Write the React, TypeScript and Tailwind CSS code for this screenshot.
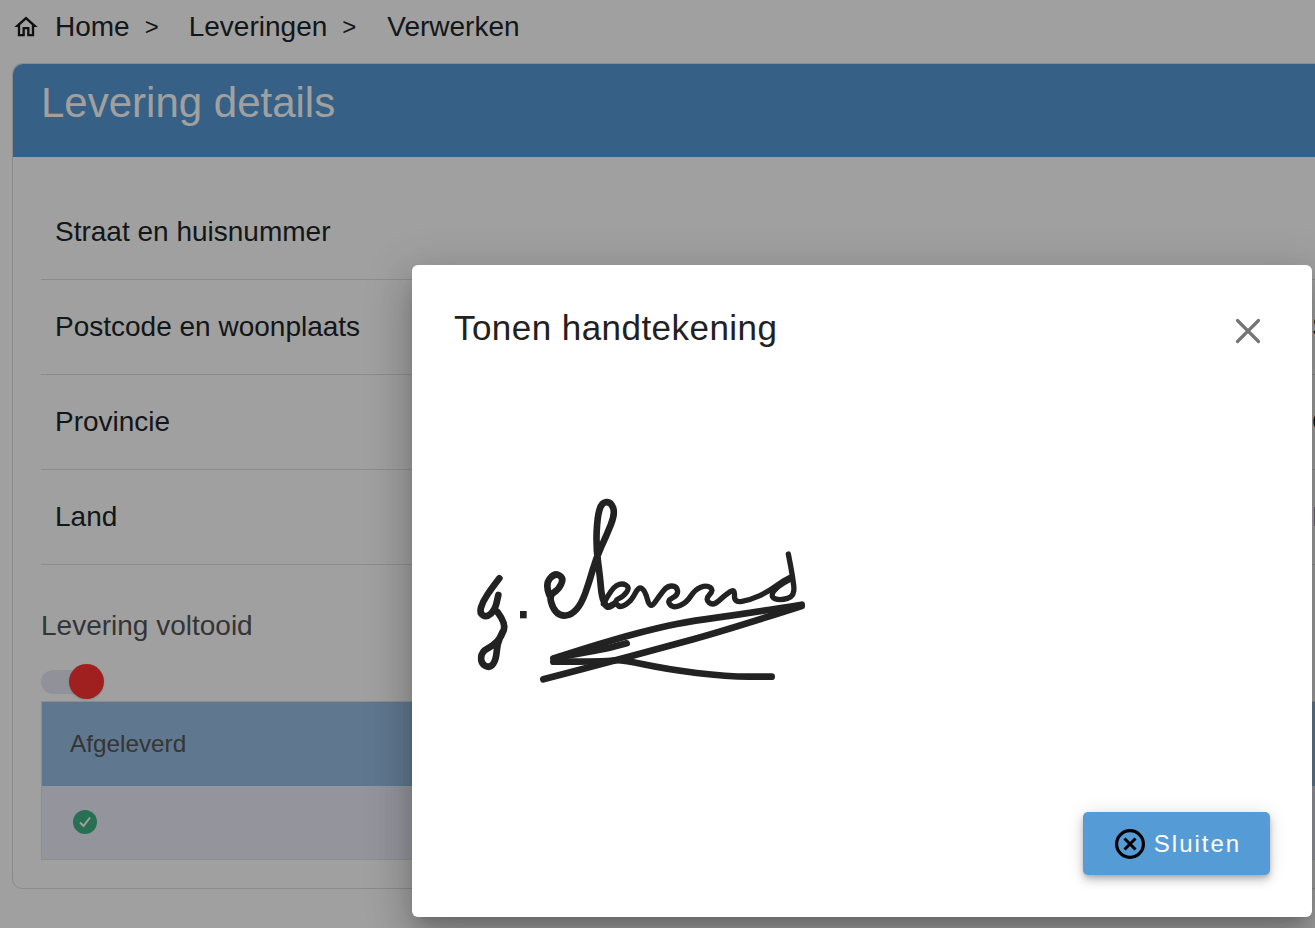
import { useState } from 'react'

const rows = [
  { label: 'Straat en huisnummer', value: '', color: '' },
  { label: 'Postcode en woonplaats', value: 'Sint', color: '' },
  { label: 'Provincie', value: 'Overijssel', color: '' },
  { label: 'Land', value: 'Nederland', color: 'text-[#3f86c4]' },
]

// rounds the hand traced points of the signature off
const smooth = (pts: number[][]) => {
  let d = `M${pts[0][0]} ${pts[0][1]}`
  for (let i = 1; i < pts.length - 1; i++) {
    const mx = (pts[i][0] + pts[i + 1][0]) / 2
    const my = (pts[i][1] + pts[i + 1][1]) / 2
    d += ` Q${pts[i][0]} ${pts[i][1]} ${mx} ${my}`
  }
  const last = pts[pts.length - 1]
  return d + ` L${last[0]} ${last[1]}`
}

const thinStrokes = [
  // e v e r d of the word
  [[430, 372], [455, 325], [485, 308], [510, 322], [490, 350], [462, 362], [480, 385], [515, 362], [535, 320], [555, 330], [570, 388], [600, 345], [622, 318], [650, 318], [655, 345], [620, 362], [640, 385], [680, 368], [705, 328], [740, 315], [762, 330], [735, 358], [760, 378], [795, 345], [825, 325], [822, 368], [870, 360], [925, 335], [965, 305], [990, 292]],
  [[990, 298], [952, 318], [930, 350], [960, 362], [1005, 348], [998, 290], [985, 222]],
]

const strokes = [
  // g
  [[118, 295], [95, 325], [68, 365], [58, 400], [80, 412], [105, 390], [115, 345]],
  [[112, 395], [138, 430], [125, 470], [98, 498], [65, 515], [62, 550], [90, 565], [108, 540], [112, 490], [128, 455]],
  // e, long l
  [[268, 345], [255, 312], [285, 278], [312, 295], [295, 330], [268, 345], [278, 385], [300, 408], [335, 405], [365, 370], [388, 305], [408, 235], [440, 165], [466, 100], [452, 65], [425, 68], [412, 110], [408, 200], [420, 290], [425, 350], [440, 385], [462, 372]],
  // underlines
  [[1025, 374], [850, 402], [700, 422], [600, 442], [470, 476], [280, 535]],
  [[1025, 378], [800, 450], [600, 505], [440, 548], [250, 598]],
  [[300, 530], [420, 510], [500, 490]],
  [[280, 545], [440, 545], [480, 538], [620, 568], [800, 590], [935, 590]],
]

function HomeIcon() {
  return (
    <svg width="28" height="28" viewBox="0 0 24 24" fill="#1a1a1a" className="shrink-0">
      <path d="M12 5.69l5 4.5V18h-2v-6H9v6H7v-7.81l5-4.5M12 3L2 12h3v8h6v-6h2v6h6v-8h3L12 3z" />
    </svg>
  )
}

function Signature() {
  return (
    <svg width="360" height="220" viewBox="0 0 1080 660" fill="none" stroke="#222" strokeWidth="20" strokeLinejoin="round" strokeLinecap="round">
      {strokes.map((pts, i) => (
        <path key={i} d={smooth(pts)} />
      ))}
      {thinStrokes.map((pts, i) => (
        <path key={i} d={smooth(pts)} strokeWidth="16" />
      ))}
      <rect x="180" y="393" width="20" height="22" fill="#222" stroke="none" />
    </svg>
  )
}

export default function App() {
  const [open, setOpen] = useState(true)

  return (
    <div className="relative h-[928px] w-[1315px] overflow-hidden bg-white font-['Liberation_Sans',sans-serif] text-[#212529]">
      <nav className="flex h-[54px] items-center pl-[12px] text-[28px]">
        <HomeIcon />
        <span className="ml-[15px]">Home</span>
        <span className="ml-[15px] text-[24px]">&gt;</span>
        <span className="ml-[30px]">Leveringen</span>
        <span className="ml-[15px] text-[24px]">&gt;</span>
        <span className="ml-[31px]">Verwerken</span>
      </nav>

      <div className="ml-3 mt-[9px] w-[1500px] rounded-[10px] border border-[#dcdcdc]">
        <div className="flex h-[93px] items-start rounded-t-[10px] bg-[#5799d4] pl-[28px] pt-[12px] text-[42px] leading-[54px] text-white">
          Levering details
        </div>

        <div className="px-[28px] pt-[28px] pb-[28px]">
          {rows.map((row) => (
            <div key={row.label} className="flex h-[95px] items-center border-b border-[#dee2e6] pl-[14px] text-[28px]">
              <span className="w-[1257px] shrink-0">{row.label}</span>
              <span className={row.color}>{row.value}</span>
            </div>
          ))}

          <div className="mt-[44px] text-[28px] leading-[34px] text-[#555]">Levering voltooid</div>

          <div className="relative mt-[27px] h-[24px] w-[62px] rounded-full bg-[#e8e8f4]">
            <div className="absolute left-[28px] top-[-6px] h-[35px] w-[35px] rounded-full bg-[#ff3434] shadow-sm" />
          </div>

          <div className="mt-[7px] border border-[#dee2e6]">
            <div className="flex h-[84px] items-center bg-[#98bfe4] pl-[28px] text-[24.3px] text-[#555]">Afgeleverd</div>
            <div className="flex h-[73px] items-center bg-[#ececfa] pb-[2px] pl-[31px]">
              <svg width="24" height="24" viewBox="0 0 24 24" fill="none">
                <circle cx="12" cy="12" r="12" fill="#41b186" />
                <path d="M7 12.5l3.5 3.5L17 7.5" stroke="#fff" strokeWidth="2" />
              </svg>
            </div>
          </div>
        </div>
      </div>

      {open && (
        <>
          <div className="absolute inset-0 bg-black/[0.373]" />
          <div className="absolute left-[412px] top-[265px] flex h-[652px] w-[900px] flex-col rounded-[6px] bg-white px-[42px] pt-[42px] pb-[42px] shadow-[0_11px_15px_-7px_rgba(0,0,0,0.2),0_24px_38px_3px_rgba(0,0,0,0.14),0_9px_46px_8px_rgba(0,0,0,0.12)]">
            <div className="flex h-[42px] items-start justify-between">
              <h2 className="text-[35px] leading-[42px] tracking-[0.45px] text-[#212121]">Tonen handtekening</h2>
              <button className="mr-[8px] mt-[10px]" onClick={() => setOpen(false)}>
                <svg width="28" height="28" viewBox="0 0 28 28" stroke="#757575" strokeWidth="3.2" strokeLinecap="round">
                  <path d="M3.5 3.5L24.5 24.5M24.5 3.5L3.5 24.5" />
                </svg>
              </button>
            </div>

            <div className="ml-[6px] mt-[131px]">
              <Signature />
            </div>

            <div className="mt-auto flex justify-end">
              <button
                className="flex h-[63px] w-[187px] items-center justify-center gap-[6px] rounded-[5px] bg-[#559bd6] text-[24px] tracking-[2px] text-white shadow-[0_3px_5px_-1px_rgba(0,0,0,0.2),0_6px_10px_0_rgba(0,0,0,0.14),0_1px_18px_0_rgba(0,0,0,0.12)]"
                onClick={() => setOpen(false)}
              >
                <svg width="36" height="36" viewBox="0 0 36 36" fill="none" stroke="#000" strokeWidth="3.2">
                  <circle cx="18" cy="18" r="13.4" />
                  <path d="M12.5 12.5L23.5 23.5M23.5 12.5L12.5 23.5" strokeWidth="3" />
                </svg>
                Sluiten
              </button>
            </div>
          </div>
        </>
      )}
    </div>
  )
}
